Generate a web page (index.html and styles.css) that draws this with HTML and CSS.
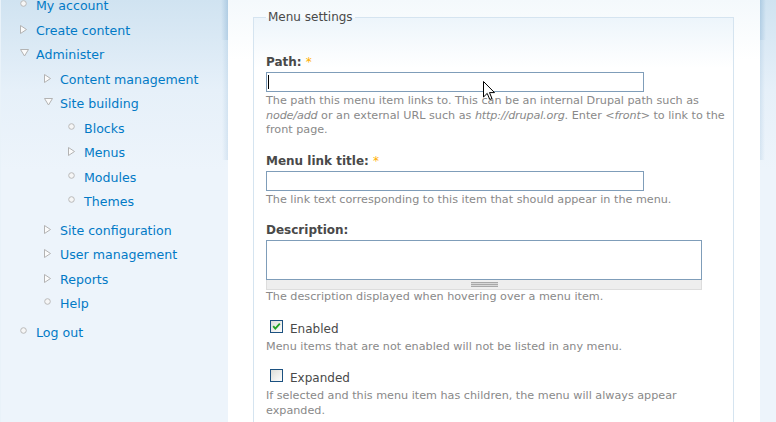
FILE: index.html
```html
<!DOCTYPE html>
<html>
<head>
	<meta charset="utf-8">
	<title>Add menu item</title>
	<link rel="stylesheet" href="styles.css">
</head>
<body>
<svg class="defs" width="0" height="0">
	<symbol id="icon-leaf" viewBox="0 0 16 9">
		<circle cx="3.5" cy="3.5" r="2.8" fill="#f6f6f6" stroke="#b9b9b9" stroke-width="1"/>
	</symbol>
	<symbol id="icon-collapsed" viewBox="0 0 16 9">
		<polygon points="0.5,0.5 6.5,4.5 0.5,8.5" fill="#fbfbfb" stroke="#b3b3b3" stroke-width="1" stroke-linejoin="round"/>
	</symbol>
	<symbol id="icon-expanded" viewBox="0 0 16 9">
		<polygon points="0.5,0.5 8.5,0.5 4.5,7" fill="#fbfbfb" stroke="#b3b3b3" stroke-width="1" stroke-linejoin="round"/>
	</symbol>
</svg>
<div class="page">
	<div class="sidebar">
		<ul class="menu">
			<li><svg class="bullet"><use href="#icon-leaf"/></svg><a href="#">My account</a></li>
			<li><svg class="bullet"><use href="#icon-collapsed"/></svg><a href="#">Create content</a></li>
			<li><svg class="bullet"><use href="#icon-expanded"/></svg><a href="#">Administer</a>
				<ul class="menu">
					<li><svg class="bullet"><use href="#icon-collapsed"/></svg><a href="#">Content management</a></li>
					<li><svg class="bullet"><use href="#icon-expanded"/></svg><a href="#">Site building</a>
						<ul class="menu">
							<li><svg class="bullet"><use href="#icon-leaf"/></svg><a href="#">Blocks</a></li>
							<li><svg class="bullet"><use href="#icon-collapsed"/></svg><a href="#">Menus</a></li>
							<li><svg class="bullet"><use href="#icon-leaf"/></svg><a href="#">Modules</a></li>
							<li><svg class="bullet"><use href="#icon-leaf"/></svg><a href="#">Themes</a></li>
						</ul>
					</li>
					<li><svg class="bullet"><use href="#icon-collapsed"/></svg><a href="#">Site configuration</a></li>
					<li><svg class="bullet"><use href="#icon-collapsed"/></svg><a href="#">User management</a></li>
					<li><svg class="bullet"><use href="#icon-collapsed"/></svg><a href="#">Reports</a></li>
					<li><svg class="bullet"><use href="#icon-leaf"/></svg><a href="#">Help</a></li>
				</ul>
			</li>
			<li><svg class="bullet"><use href="#icon-leaf"/></svg><a href="#">Log out</a></li>
		</ul>
	</div>

	<div class="main">
		<fieldset class="menu-settings">
			<legend>Menu settings</legend>

			<div class="form-item">
				<label for="edit-path">Path: <span class="form-required">*</span></label>
				<div class="field-wrap">
					<input type="text" id="edit-path" class="form-text">
					<span class="caret"></span>
				</div>
				<div class="description">The path this menu item links to. This can be an internal Drupal path such as <em>node/add</em> or an external URL such as <em>http://drupal.org</em>. Enter <em>&lt;front&gt;</em> to link to the front page.</div>
			</div>

			<div class="form-item">
				<label for="edit-title">Menu link title: <span class="form-required">*</span></label>
				<input type="text" id="edit-title" class="form-text">
				<div class="description">The link text corresponding to this item that should appear in the menu.</div>
			</div>

			<div class="form-item">
				<label for="edit-description">Description:</label>
				<textarea id="edit-description" class="form-textarea"></textarea>
				<div class="grippie"><span class="grip"></span></div>
				<div class="description">The description displayed when hovering over a menu item.</div>
			</div>

			<div class="form-item">
				<div class="option">
					<svg class="checkbox" width="13" height="13" viewBox="0 0 13 13">
						<defs>
							<linearGradient id="boxfill" x1="0" y1="0" x2="1" y2="1">
								<stop offset="0" stop-color="#dcdcd6"/>
								<stop offset="1" stop-color="#ffffff"/>
							</linearGradient>
						</defs>
						<rect x="0.5" y="0.5" width="12" height="12" fill="url(#boxfill)" stroke="#1c5180"/>
						<path d="M3.2 6.2 L5.3 8.6 L9.8 3.6" fill="none" stroke="#21a121" stroke-width="1.8"/>
					</svg>
					<span>Enabled</span>
				</div>
				<div class="description">Menu items that are not enabled will not be listed in any menu.</div>
			</div>

			<div class="form-item">
				<div class="option">
					<svg class="checkbox" width="13" height="13" viewBox="0 0 13 13">
						<rect x="0.5" y="0.5" width="12" height="12" fill="url(#boxfill)" stroke="#1c5180"/>
					</svg>
					<span>Expanded</span>
				</div>
				<div class="description">If selected and this menu item has children, the menu will always appear expanded.</div>
			</div>
		</fieldset>
	</div>

	<div class="sidebar-right"></div>
</div>

<svg class="pointer" width="13" height="20" viewBox="0 0 13 20">
	<path d="M0.5 0.5 L0.5 16 L4.2 12.4 L6.8 18.5 L9 17.6 L6.5 11.6 L11.5 11.6 Z" fill="#fff" stroke="#000" stroke-width="1" stroke-linejoin="miter"/>
</svg>
</body>
</html>
```

FILE: styles.css
```css
body {
	margin: 0;
	font-family: "DejaVu Sans", Verdana, sans-serif;
	color: #494949;
}

.defs {
	position: absolute;
}

.page {
	display: flex;
	height: 422px;
	overflow: hidden;
}

/* left sidebar with the navigation menu */

.sidebar {
	width: 228px;
	flex: none;
	background:
		linear-gradient(to left, rgba(110, 160, 200, 0.35), rgba(110, 160, 200, 0) 7px) top right / 100% 40px no-repeat,
		linear-gradient(to left, rgba(110, 160, 200, 0.18), rgba(110, 160, 200, 0) 6px) 0 40px / 100% 120px no-repeat,
		linear-gradient(#d0e3f1, #e6f0f9 90px, #edf4fb 170px);
	border-left: 1px solid #e9f2f9;
	box-sizing: border-box;
}

.sidebar .menu {
	list-style: none;
	margin: -6px 0 0;
	padding: 0 0 0 19px;
	font-size: 12.6px;
	line-height: 24.5px;
}

.menu .menu {
	margin: 0 0 4px;
	padding-left: 24px;
}

.menu a {
	color: #027ac6;
	text-decoration: none;
}

.bullet {
	width: 16px;
	height: 9px;
	vertical-align: 1px;
}

/* main content */

.main {
	width: 532px;
	flex: none;
	background: linear-gradient(#f4f9fc, #ffffff 60px);
}

.menu-settings {
	margin: 8px 26px 0 25px;
	padding: 27px 0 20px 12px;
	border: 1px solid #d5e4f0;
	background: linear-gradient(#edf5fb, #ffffff 50px);
	min-width: 0;
}

.menu-settings legend {
	padding: 0 2px;
	font-size: 12px;
	line-height: 18px;
	color: #494949;
}

.form-item {
	margin-bottom: 14px;
}

.form-item label {
	display: block;
	font-weight: bold;
	font-size: 12px;
	line-height: 18px;
	margin-bottom: 1px;
}

.form-required {
	color: #ffae00;
	font-weight: normal;
}

.field-wrap {
	position: relative;
}

.form-text {
	display: block;
	width: 378px;
	height: 20px;
	box-sizing: border-box;
	margin: 0;
	padding: 0 2px;
	border: 1px solid #7f9db9;
	font: 12px "DejaVu Sans", Verdana, sans-serif;
	outline: none;
}

.caret {
	position: absolute;
	left: 2px;
	top: 3px;
	width: 1px;
	height: 14px;
	background: #000;
}

.form-textarea {
	display: block;
	width: 436px;
	height: 40px;
	box-sizing: border-box;
	margin: 0;
	border: 1px solid #7f9db9;
	resize: none;
	font: 12px "DejaVu Sans", Verdana, sans-serif;
}

.grippie {
	width: 436px;
	height: 10px;
	box-sizing: border-box;
	border: 1px solid #dddddd;
	border-top: 0;
	background: #eeeeee;
	display: flex;
	justify-content: center;
	padding-top: 2px;
}

.grip {
	width: 27px;
	height: 5px;
	background: repeating-linear-gradient(#a8a8a8 0 1px, #d8d8d8 1px 2px);
}

.description {
	margin-top: 2px;
	font-size: 11.2px;
	line-height: 14.5px;
	color: #898989;
}

.description em {
	letter-spacing: -0.15px;
}

.grippie + .description {
	margin-top: 0;
}

.option {
	display: flex;
	align-items: center;
	gap: 7px;
	height: 20px;
	padding-left: 4px;
	font-size: 12px;
}

.option .checkbox {
	align-self: flex-start;
	margin-top: 1px;
}

.option + .description {
	margin-top: 1px;
}

.sidebar-right {
	flex: 1;
	background:
		linear-gradient(to right, rgba(110, 160, 200, 0.35), rgba(110, 160, 200, 0) 6px) top left / 100% 40px no-repeat,
		linear-gradient(to right, rgba(110, 160, 200, 0.18), rgba(110, 160, 200, 0) 5px) 0 40px / 100% 120px no-repeat,
		linear-gradient(#d0e3f1, #e6f0f9 90px, #edf4fb 170px);
}

/* mouse pointer caught in the screenshot */

.pointer {
	position: absolute;
	left: 483px;
	top: 81px;
}
```
